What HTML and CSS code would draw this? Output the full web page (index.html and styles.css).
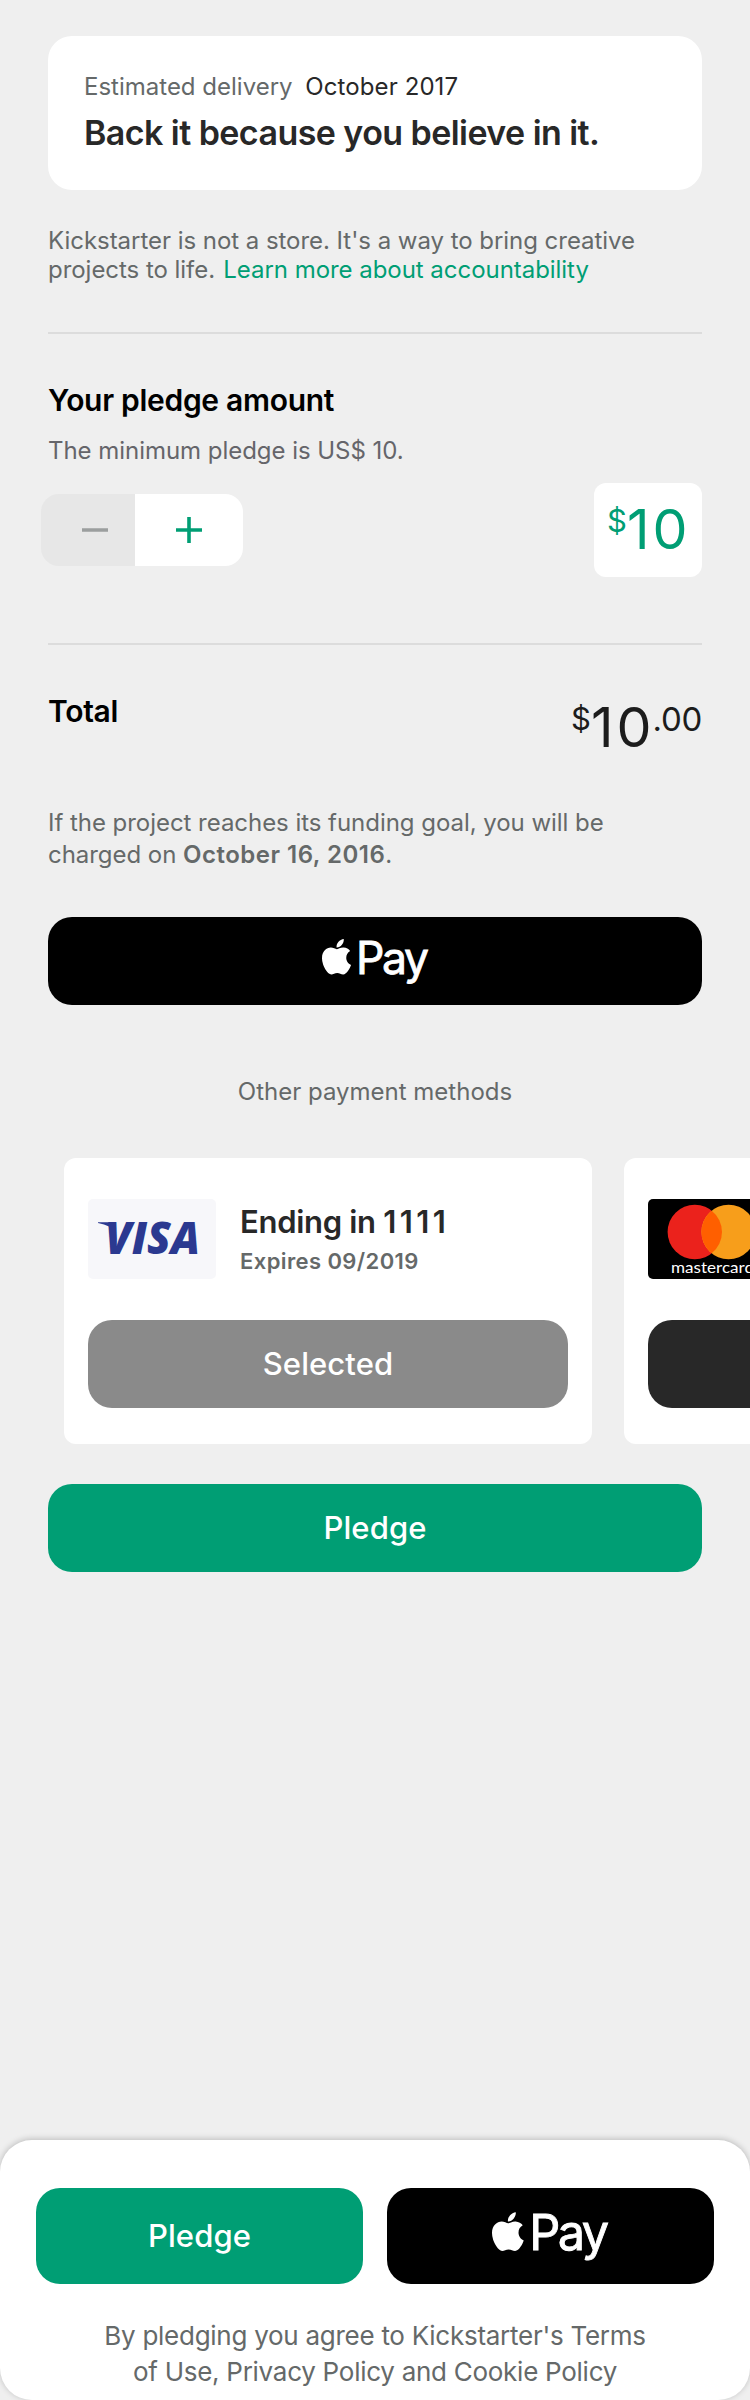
FILE: index.html
```html
<!DOCTYPE html>
<html lang="en">
<head>
<meta charset="utf-8">
<title>Back this project</title>
<link rel="stylesheet" href="styles.css">
</head>
<body>
<main class="content">
  <section class="reward">
    <p class="delivery">Estimated delivery <span class="date">October 2017</span></p>
    <h1 class="reward-title">Back it because you believe in it.</h1>
  </section>
  <p class="disclaimer">Kickstarter is not a store. It's a way to bring creative<br>projects to life. <a class="link">Learn more about accountability</a></p>
  <hr class="rule">
  <section class="pledge-amount">
    <h2 class="heading">Your pledge amount</h2>
    <p class="minimum">The minimum pledge is US$ 10.</p>
    <div class="amount-row">
      <div class="stepper">
        <button class="step step-minus" aria-label="Decrease"><svg width="26" height="26" viewBox="0 0 26 26"><path d="M0 13H26" stroke="#9b9e9e" stroke-width="3.6"/></svg></button>
        <button class="step step-plus" aria-label="Increase"><svg width="26" height="26" viewBox="0 0 26 26"><path d="M0 13H26M13 0V26" stroke="#009e74" stroke-width="3.6"/></svg></button>
      </div>
      <div class="amount-box"><span class="currency">$</span><span class="whole">10</span></div>
    </div>
  </section>
  <hr class="rule">
  <section class="total">
    <h2 class="heading">Total</h2>
    <div class="total-amount"><span class="currency">$</span><span class="whole">10</span><span class="cents">.00</span></div>
  </section>
  <p class="charge">If the project reaches its funding goal, you will be<br>charged on <b class="charge-date">October 16, 2016</b>.</p>
  <button class="button button-black" aria-label="Apple Pay">
    <svg class="apple-pay" viewBox="0 0 107 50">
      <path transform="scale(.0771 .0792) translate(-4 -32)" d="M318.7 268.7c-.2-36.7 16.4-64.4 50-84.8-18.8-26.9-47.2-41.7-84.7-44.6-35.5-2.8-74.3 20.7-88.5 20.7-15 0-49.4-19.7-76.4-19.7C63.3 141.2 4 184.8 4 273.5q0 39.3 14.4 81.2c12.8 36.7 59 126.7 107.2 125.2 25.2-.6 43-17.9 75.8-17.9 31.8 0 48.3 17.9 76.4 17.9 48.6-.7 90.4-82.5 102.6-119.3-65.2-30.7-61.7-90-61.7-91.9zm-56.6-164.2c27.3-32.4 24.8-61.9 24-72.5-24.1 1.4-52 16.4-67.9 34.9-17.5 19.8-27.8 44.3-25.6 71.9 26.1 2 49.9-11.4 69.5-34.3z" fill="#fff"/>
      <text class="pay-word" x="34" y="35" textLength="73" lengthAdjust="spacing">Pay</text>
    </svg>
  </button>
  <p class="other">Other payment methods</p>
  <div class="cards">
    <article class="card">
      <div class="card-info">
        <svg class="card-logo" viewBox="0 0 128 80">
          <rect width="128" height="80" rx="5" fill="#f7f7fa"/>
          <path d="M10 23.3H25L28 34Q23 26 10 24Z" fill="#2b3990"/>
          <text class="visa-word" x="17" y="55.2" textLength="95" lengthAdjust="spacingAndGlyphs">VISA</text>
        </svg>
        <div class="card-text">
          <h3 class="card-number">Ending in <span class="digits">1111</span></h3>
          <p class="card-expiry">Expires 09/2019</p>
        </div>
      </div>
      <button class="button button-selected">Selected</button>
    </article>
    <article class="card">
      <div class="card-info">
        <svg class="card-logo" viewBox="0 0 128 80">
          <rect width="128" height="80" rx="5" fill="#000"/>
          <circle cx="46.8" cy="33" r="27.2" fill="#eb221c"/>
          <circle cx="80.6" cy="33" r="27.2" fill="#f79e1b"/>
          <path d="M63.7 11.7A27.2 27.2 0 0 1 63.7 54.3A27.2 27.2 0 0 1 63.7 11.7Z" fill="#ff5f00"/>
          <text class="mastercard-word" x="23" y="74" textLength="83" lengthAdjust="spacingAndGlyphs">mastercard</text>
        </svg>
      </div>
      <button class="button button-dark" aria-label="Select"></button>
    </article>
  </div>
  <button class="button button-green">Pledge</button>
</main>
<footer class="sheet">
  <div class="sheet-actions">
    <button class="button button-tall button-green">Pledge</button>
    <button class="button button-tall button-black" aria-label="Apple Pay">
      <svg class="apple-pay apple-pay-large" viewBox="0 0 107 50">
        <path transform="scale(.0771 .0792) translate(-4 -32)" d="M318.7 268.7c-.2-36.7 16.4-64.4 50-84.8-18.8-26.9-47.2-41.7-84.7-44.6-35.5-2.8-74.3 20.7-88.5 20.7-15 0-49.4-19.7-76.4-19.7C63.3 141.2 4 184.8 4 273.5q0 39.3 14.4 81.2c12.8 36.7 59 126.7 107.2 125.2 25.2-.6 43-17.9 75.8-17.9 31.8 0 48.3 17.9 76.4 17.9 48.6-.7 90.4-82.5 102.6-119.3-65.2-30.7-61.7-90-61.7-91.9zm-56.6-164.2c27.3-32.4 24.8-61.9 24-72.5-24.1 1.4-52 16.4-67.9 34.9-17.5 19.8-27.8 44.3-25.6 71.9 26.1 2 49.9-11.4 69.5-34.3z" fill="#fff"/>
        <text class="pay-word" x="34" y="35" textLength="73" lengthAdjust="spacing">Pay</text>
      </svg>
    </button>
  </div>
  <p class="terms">By pledging you agree to Kickstarter's Terms<br>of Use, Privacy Policy and Cookie Policy</p>
</footer>
</body>
</html>
```
FILE: styles.css
```css
* { box-sizing: border-box; }
body {
  margin: 0;
  width: 750px;
  height: 2400px;
  display: flex;
  flex-direction: column;
  overflow: hidden;
  background: #efefef;
  color: #656969;
  font: 400 24px/30px Inter, "Liberation Sans", sans-serif;
}
h1, h2, h3, p { margin: 0; white-space: nowrap; }
.content { padding: 36px 48px 0; display: flex; flex-direction: column; }

.reward { height: 154px; padding: 36px 36px 0; border-radius: 24px; background: #fff; }
.date { margin-left: 6px; color: #282828; letter-spacing: .1px; }
.reward-title { margin-top: 11px; color: #282828; font-size: 34px; line-height: 40px; font-weight: 600; letter-spacing: -0.56px; }

.disclaimer { margin-top: 36px; line-height: 29px; letter-spacing: -0.04px; }
.link { margin-left: 1.5px; color: #009e74; letter-spacing: -0.04px; }
.rule { width: 100%; height: 2px; margin: 48px 0; border: 0; background: #dcdcdc; }

.heading { color: #000; font-size: 30px; line-height: 36px; font-weight: 600; letter-spacing: -0.3px; }
.minimum { margin-top: 18px; color: #65656a; letter-spacing: -0.04px; }
.amount-row { margin: 17px 0 18px; display: flex; align-items: center; justify-content: space-between; }
.stepper { display: flex; width: 202px; height: 72px; margin-left: -7px; border-radius: 18px; overflow: hidden; }
.step { display: flex; align-items: center; border: 0; padding: 0; }
.step-minus { width: 94px; padding-left: 41px; background: #e7e7e7; }
.step-plus { width: 108px; padding-left: 41px; background: #fff; }
.amount-box { display: flex; width: 108px; height: 94px; padding: 17px 0 0 13px; border-radius: 12px; background: #fff; color: #009e74; }
.currency { font-size: 31px; line-height: 42px; }
.whole { font-size: 55.5px; line-height: 57px; letter-spacing: 3px; }
.cents { margin-left: -2px; font-size: 33px; line-height: 42px; letter-spacing: -0.3px; }

.total { height: 114px; display: flex; justify-content: space-between; }
.total-amount { display: flex; padding-top: 5px; color: #1c1c1c; }
.charge { line-height: 32px; letter-spacing: -0.04px; }
.charge-date { font-weight: 600; letter-spacing: .5px; }

.button { width: 100%; height: 88px; padding: 0; display: flex; align-items: center; justify-content: center; border: 0; border-radius: 24px; color: #fff; font: 550 31px/38px Inter, "Liberation Sans", sans-serif; letter-spacing: .1px; }
.button-black { background: #000; }
.button-dark { background: #282828; }
.button-green { background: #009e74; }
.button-selected { background: #8a8a8a; }
.button-tall { height: 96px; flex: 1; }
.charge + .button { margin-top: 46px; }
.apple-pay { width: 107px; height: 50px; margin-top: 5px; overflow: visible; }
.apple-pay-large { width: 117px; height: 55px; margin-top: 6px; }
.pay-word { fill: #fff; font: 400 44.5px Inter, sans-serif; stroke: #fff; stroke-width: .8px; letter-spacing: 0; }

.other { margin-top: 72px; text-align: center; }
.cards { display: flex; gap: 32px; margin: 51px -48px 40px 16px; overflow: hidden; }
.card { flex: none; width: 528px; height: 286px; padding: 41px 24px 0; border-radius: 12px; background: #fff; }
.card-info { display: flex; gap: 24px; height: 80px; margin-bottom: 41px; }
.card-logo { width: 128px; height: 80px; flex: none; }
.card-text { padding-top: 5px; }
.card-number { color: #282828; font-size: 31px; line-height: 36px; font-weight: 600; letter-spacing: -0.3px; }
.digits { letter-spacing: 3.4px; }
.card-expiry { margin-top: 7px; font-size: 22px; line-height: 28px; font-weight: 600; letter-spacing: .4px; }
.visa-word { fill: #2b3990; font: italic 800 44px "Open Sans", sans-serif; }
.mastercard-word { fill: #fff; font: 400 16px Lato, sans-serif; }

.sheet { margin-top: auto; height: 260px; padding: 48px 36px 0; border-radius: 32px; background: #fff; box-shadow: 0 -1px 6px rgba(0, 0, 0, .22); }
.sheet-actions { display: flex; gap: 24px; }
.terms { margin-top: 34px; font-size: 26px; line-height: 36px; letter-spacing: -0.27px; text-align: center; }
```
